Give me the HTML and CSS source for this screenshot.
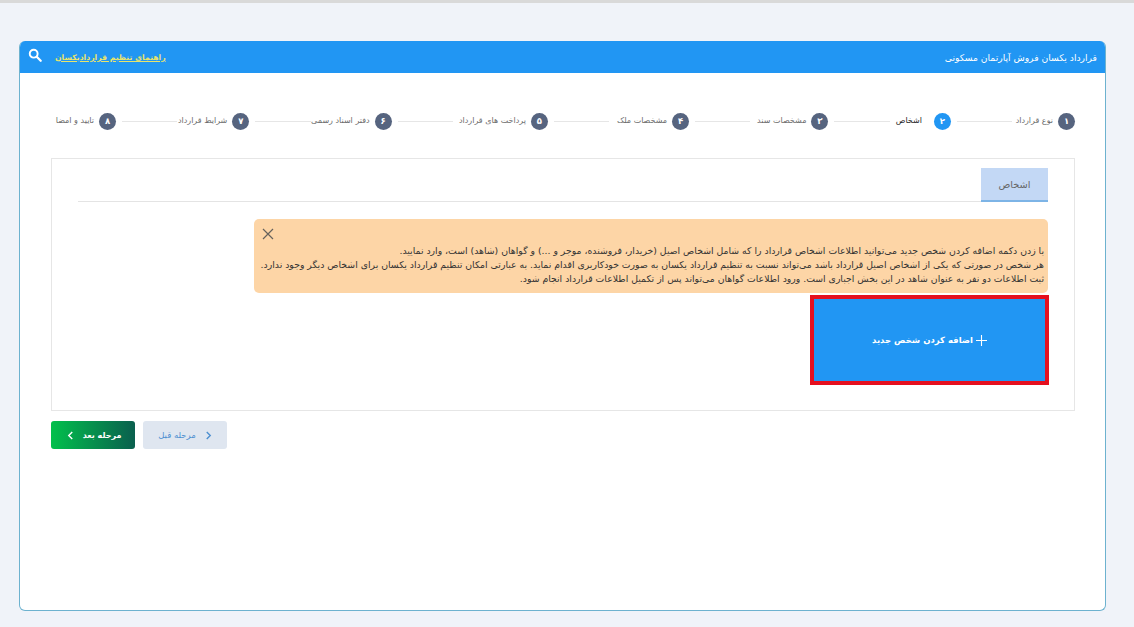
FILE: index.html
```html
<!DOCTYPE html>
<html lang="fa" dir="rtl">
<head>
<meta charset="utf-8">
<title>قرارداد یکسان</title>
<link rel="stylesheet" href="styles.css">
</head>
<body>
<div class="topline"></div>
<main class="card">
  <header class="card-head">
    <span class="card-title">قرارداد یکسان فروش آپارتمان مسکونی</span>
    <div class="guide">
      <a class="guide-link" href="#">راهنمای تنظیم قراردادیکسان</a>
      <svg class="search" viewBox="0 0 16 16" width="14" height="14"><circle cx="6.5" cy="6.5" r="4.5" fill="none" stroke="#fff" stroke-width="2.2"/><path d="M10 10l4.5 4.5" stroke="#fff" stroke-width="2.6" stroke-linecap="round"/></svg>
    </div>
  </header>
  <div class="card-body">
    <ol class="steps">
      <li class="step"><span class="num">۱</span><span class="label l1">نوع قرارداد</span></li><li class="line"></li>
      <li class="step active"><span class="num">۲</span><span class="label l2">اشخاص</span></li><li class="line"></li>
      <li class="step"><span class="num">۳</span><span class="label l3">مشخصات سند</span></li><li class="line"></li>
      <li class="step"><span class="num">۴</span><span class="label l4">مشخصات ملک</span></li><li class="line"></li>
      <li class="step"><span class="num">۵</span><span class="label l5">پرداخت های قرارداد</span></li><li class="line"></li>
      <li class="step"><span class="num">۶</span><span class="label l6">دفتر اسناد رسمی</span></li><li class="line"></li>
      <li class="step"><span class="num">۷</span><span class="label l7">شرایط قرارداد</span></li><li class="line"></li>
      <li class="step"><span class="num">۸</span><span class="label l8">تایید و امضا</span></li>
    </ol>
    <section class="panel">
      <div class="tabs"><span class="tab">اشخاص</span></div>
      <div class="alert">
        <svg class="close" viewBox="0 0 12 12" width="12" height="12"><path d="M1 1l10 10M11 1L1 11" stroke="#66625c" stroke-width="1.2"/></svg>
        <p class="alert-text">با زدن دکمه اضافه کردن شخص جدید می‌توانید اطلاعات اشخاص قرارداد را که شامل اشخاص اصیل (خریدار، فروشنده، موجر و ...) و گواهان (شاهد) است، وارد نمایید.<br>هر شخص در صورتی که یکی از اشخاص اصیل قرارداد باشد می‌تواند نسبت به تنظیم قرارداد یکسان به صورت خودکاربری اقدام نماید. به عبارتی امکان تنظیم قرارداد یکسان برای اشخاص دیگر وجود ندارد.<br>ثبت اطلاعات دو نفر به عنوان شاهد در این بخش اجباری است. ورود اطلاعات گواهان می‌تواند پس از تکمیل اطلاعات قرارداد انجام شود.</p>
      </div>
      <button class="add" type="button"><svg viewBox="0 0 12 12" width="11" height="11"><path d="M6 0v12M0 6h12" stroke="#fff" stroke-width="1.2"/></svg><span>اضافه کردن شخص جدید</span></button>
    </section>
    <div class="nav">
      <button class="next" type="button"><span>مرحله بعد</span><svg viewBox="0 0 8 10" width="7" height="9"><path d="M6 1L2 5l4 4" fill="none" stroke="#fff" stroke-width="1.6"/></svg></button>
      <button class="prev" type="button"><svg viewBox="0 0 8 10" width="7" height="9"><path d="M2 1l4 4-4 4" fill="none" stroke="#4d8fd0" stroke-width="1.6"/></svg><span>مرحله قبل</span></button>
    </div>
  </div>
</main>
</body>
</html>
```
FILE: styles.css
```css
* { box-sizing: border-box; }
html, body { margin: 0; height: 627px; overflow: hidden; }
body {
  background: #f0f3f9;
  font-family: "DejaVu Sans", "Noto Sans", sans-serif;
  padding: 3px 28px 0 19px;
}
.topline { height: 3px; margin: -3px -28px 0 -19px; background: #d9d9d9; }
.card {
  margin-top: 38px;
  height: 570px;
  background: #fff;
  border: 1px solid #6db2cf;
  border-top: 0;
  border-radius: 6px;
  overflow: hidden;
  display: flex;
  flex-direction: column;
}
.card-head {
  height: 32px;
  flex: none;
  margin: 0 -1px;
  background: #2196f3;
  color: #fff;
  display: flex;
  justify-content: space-between;
  align-items: center;
  padding: 0 9px;
}
.card-title { font-size: 9.2px; }
.guide { display: flex; align-items: center; gap: 13px; }
.guide-link { font-size: 7.7px; font-weight: bold; color: #e8e46c; text-decoration: underline; }
.search { margin-top: -5px; }
.card-body { padding: 0 30px 0 31px; flex: 1; }
.steps {
  list-style: none;
  margin: 38px 0 0;
  padding: 0;
  height: 20px;
  display: flex;
  align-items: center;
  gap: 6px;
}
.step { display: flex; align-items: center; gap: 5px; }
.num {
  width: 17px; height: 17px;
  border-radius: 50%;
  background: #56647f;
  color: #fff;
  font-size: 8.5px;
  font-weight: bold;
  display: flex;
  align-items: center;
  justify-content: center;
}
.label { font-size: 8px; color: #6b6b6b; white-space: nowrap; margin-top: -2px; }
.l1 { width: 35px; }
.l2 { width: 33px; text-align: left; }
.l3 { width: 50px; }
.l4 { width: 52px; }
.l5 { width: 67px; }
.l6 { width: 53px; }
.l7 { width: 44px; }
.l8 { width: 43px; }
.active .num { background: #2196f3; }
.active .label { color: #222; }
.line { flex: 1; height: 1px; background: #e6e6e6; }
.panel {
  margin-top: 27px;
  height: 253px;
  border: 1px solid #e6e6e6;
  padding: 9px 26px 0 26px;
}
.tabs { border-bottom: 1px solid #e4e4e4; height: 34px; display: flex; }
.tab {
  width: 67px;
  height: 34px;
  background: #c3d8f5;
  border-bottom: 2px solid #7db4e6;
  color: #666;
  font-size: 9.8px;
  display: flex;
  align-items: center;
  justify-content: center;
}
.alert {
  margin-top: 17px;
  width: 794px;
  height: 74px;
  background: #fdd5a6;
  border-radius: 5px;
  padding: 9px 4px 0 6px;
  display: flex;
  flex-direction: column;
}
.close { align-self: flex-end; margin: 0 2px; }
.alert-text { margin: 4px 0 0; font-size: 9.3px; line-height: 14px; color: #333; white-space: nowrap; }
.add {
  display: flex;
  align-items: center;
  justify-content: center;
  gap: 3px;
  margin: 2px -1px 0 0;
  width: 239px;
  height: 90px;
  background: #2196f3;
  border: 4px solid #e5101f;
  color: #fff;
  font: bold 8.5px "DejaVu Sans", sans-serif;
}
.nav {
  margin-top: 10px;
  direction: ltr;
  display: flex;
  gap: 8px;
}
.nav button {
  width: 84px;
  height: 28px;
  border: 0;
  border-radius: 3px;
  display: flex;
  align-items: center;
  justify-content: center;
  gap: 9px;
  font: 8.5px "DejaVu Sans", sans-serif;
}
.nav .next { background: linear-gradient(90deg, #02c04c, #0a5f4e); color: #fff; flex-direction: row-reverse; padding-left: 8px; }
.next span { font-weight: bold; font-size: 8px; }
.nav .prev { background: #dfe6f0; color: #4d8fd0; flex-direction: row-reverse; padding-right: 6px; }
```
